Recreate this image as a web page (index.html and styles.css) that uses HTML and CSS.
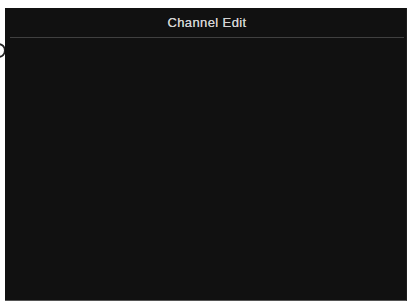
FILE: index.html
```html
<!DOCTYPE html>
<html lang="en">

<head>
    <meta charset="UTF-8">
    <title>Channel Edit</title>
    <link rel="stylesheet" href="styles.css">
</head>

<body>
    <div class="ring"></div>
    <div class="panel">
        <div class="panel-title">Channel Edit</div>
        <div class="panel-body"></div>
    </div>
</body>

</html>
```

FILE: styles.css
```css
html,
body {
    margin: 0;
    height: 100%;
}

body {
    font-family: 'Liberation Sans', Arial, sans-serif;
    background-color: #ffffff;
    padding: 8px 2px 0 5px;
    box-sizing: border-box;
    position: relative;
    overflow: hidden;
}

/* 左侧被遮挡的圆圈 */
.ring {
    position: absolute;
    left: -9px;
    top: 43px;
    width: 11px;
    height: 11px;
    border: 2px solid #222;
    border-radius: 50%;
}

.panel {
    position: relative;
    height: 100%;
    background-color: #111111;
    border-bottom: 1px solid #555;
    border-right: 1px solid #1c1c1c;
    box-sizing: border-box;
    display: flex;
    flex-direction: column;
}

.panel-title {
    margin: 0 2px 0 5px;
    padding-top: 1px;
    height: 28px;
    line-height: 28px;
    text-align: center;
    color: #d2d2d2;
    font-size: 13px;
    letter-spacing: 0.4px;
    text-shadow: 0 0 0.4px #d2d2d2;
    border-bottom: 1px solid #404040;
}

.panel-body {
    flex: 1;
}
```
